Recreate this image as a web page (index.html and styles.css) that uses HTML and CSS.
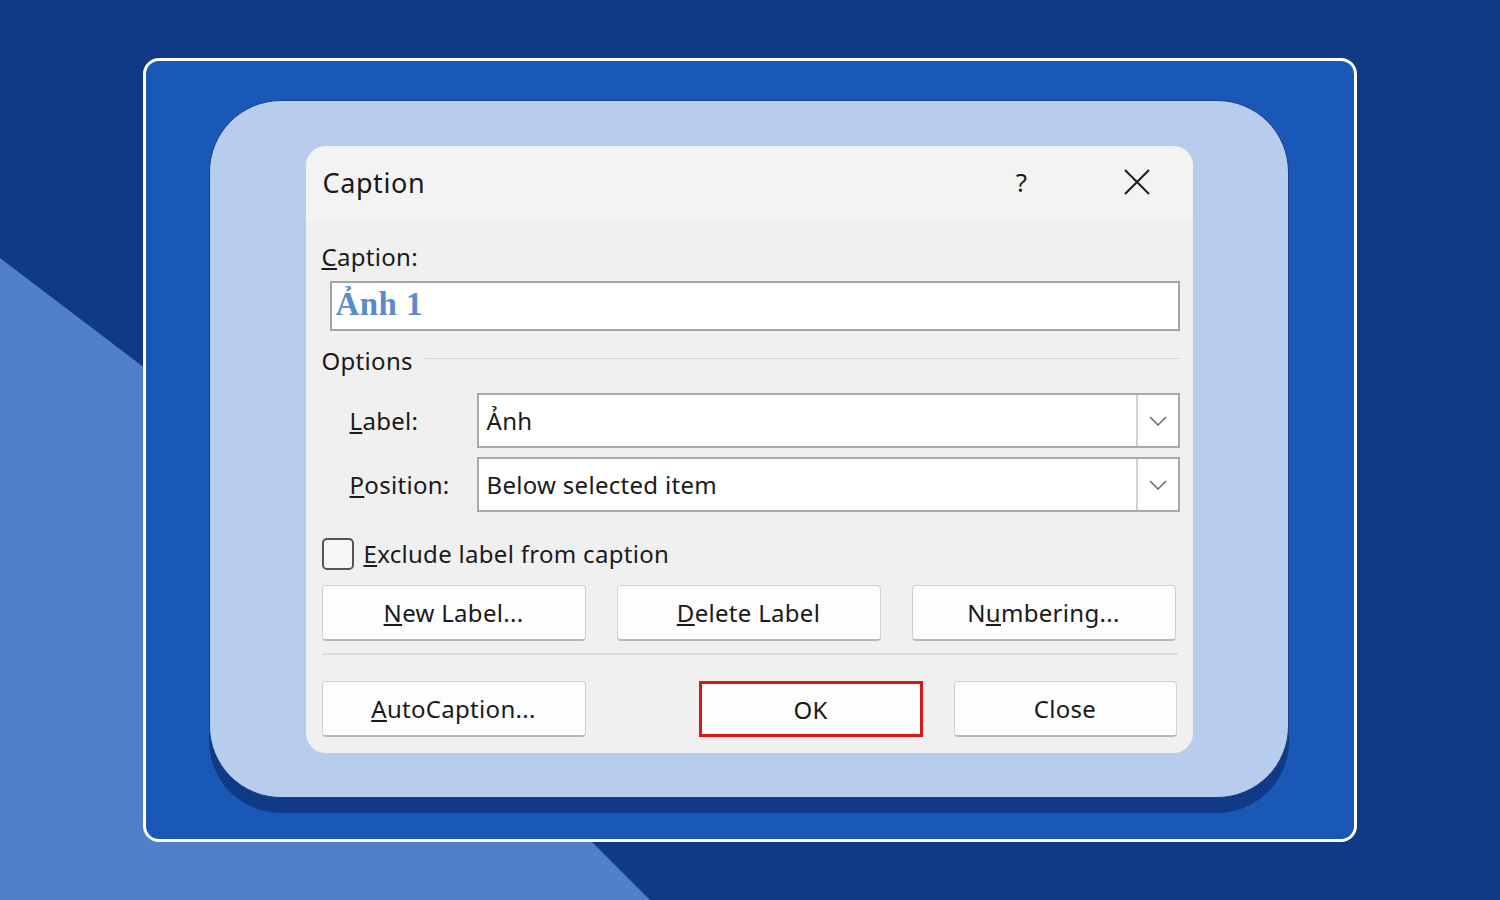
FILE: index.html
```html
<!DOCTYPE html>
<html lang="en">
<head>
  <meta charset="UTF-8" />
  <title>Caption dialog</title>
  <link rel="stylesheet" href="styles.css">
</head>
<body>
  <svg class="bg-shape" width="1500" height="900" viewBox="0 0 1500 900">
    <polygon points="0,258 150,372 150,840 590,840 650,900 0,900" fill="#5080c8"/>
  </svg>

  <div class="frame">
    <div class="panel">
      <div class="dialog">
        <div class="titlebar">
          <span class="title">Caption</span>
          <span class="help">?</span>
          <svg class="close-x" width="28" height="28" viewBox="0 0 28 28">
            <path d="M2 2 L26 26 M26 2 L2 26" stroke="#1a1a1a" stroke-width="2" fill="none"/>
          </svg>
        </div>

        <div class="body">
          <div class="field-label"><u>C</u>aption:</div>
          <div class="caption-input">Ảnh 1</div>

          <div class="group">
            <span>Options</span>
            <div class="group-line"></div>
          </div>

          <div class="row">
            <span class="row-label"><u>L</u>abel:</span>
            <div class="combo">
              <span class="combo-text">Ảnh</span>
              <div class="combo-btn">
                <svg width="18" height="10" viewBox="0 0 18 10"><path d="M1 1 L9 9 L17 1" stroke="#6a6a6a" stroke-width="1.5" fill="none"/></svg>
              </div>
            </div>
          </div>

          <div class="row second">
            <span class="row-label"><u>P</u>osition:</span>
            <div class="combo">
              <span class="combo-text">Below selected item</span>
              <div class="combo-btn">
                <svg width="18" height="10" viewBox="0 0 18 10"><path d="M1 1 L9 9 L17 1" stroke="#6a6a6a" stroke-width="1.5" fill="none"/></svg>
              </div>
            </div>
          </div>

          <div class="check-row">
            <div class="checkbox"></div>
            <span><u>E</u>xclude label from caption</span>
          </div>

          <div class="btn-grid">
            <div class="btn"><span><u>N</u>ew Label...</span></div>
            <div class="btn"><span><u>D</u>elete Label</span></div>
            <div class="btn"><span>N<u>u</u>mbering...</span></div>
          </div>

          <div class="sep"></div>

          <div class="btn-bottom">
            <div class="btn auto"><span><u>A</u>utoCaption...</span></div>
            <div class="btn ok"><span>OK</span></div>
            <div class="btn close"><span>Close</span></div>
          </div>
        </div>
      </div>
    </div>
  </div>
</body>
</html>
```

FILE: styles.css
```css
* {
  box-sizing: border-box;
}

body {
  margin: 0;
  width: 1500px;
  height: 900px;
  background: #103a85;
  font-family: "Noto Sans", "Open Sans", sans-serif;
  color: #1a1a1a;
  overflow: hidden;
  position: relative;
}

.bg-shape {
  position: absolute;
  left: 0;
  top: 0;
}

.frame {
  position: relative;
  margin: 58px 0 0 143px;
  width: 1214px;
  height: 784px;
  background: #1a58b8;
  border: 3px solid #ffffff;
  border-radius: 16px;
  padding: 39px 2px 0 0;
  display: flex;
  justify-content: center;
}

.panel {
  width: 1080px;
  height: 698px;
  background: #b8cdee;
  border: 1px solid #173f8c;
  border-radius: 72px;
  box-shadow: 0 15px 0 #103a85;
  padding-top: 45px;
  display: flex;
  justify-content: center;
}

.dialog {
  width: 887px;
  height: 607px;
  background: #f0f0f0;
  border-radius: 20px;
  overflow: hidden;
}

.titlebar {
  height: 74px;
  background: #f3f3f3;
  display: flex;
  align-items: center;
  padding: 0 0 2px 17px;
}

.title {
  font-size: 27px;
  flex: 1;
  letter-spacing: 0.6px;
}

.help {
  font-size: 26px;
  width: 30px;
  text-align: center;
  margin-right: 86px;
}

.close-x {
  margin-right: 42px;
}

.body {
  padding: 0 13px 0 16px;
  font-size: 24px;
  letter-spacing: 0.3px;
}

.field-label {
  margin-top: 22px;
  line-height: 30px;
}

.caption-input {
  margin: 9px 0 0 8px;
  height: 50px;
  background: #fff;
  border: 2px solid #a3a3a3;
  font-family: "Liberation Serif", serif;
  font-weight: bold;
  font-size: 33px;
  color: #5b8bcc;
  line-height: 42px;
  padding-left: 4px;
  letter-spacing: 0.4px;
}

.group {
  margin-top: 14px;
  height: 30px;
  display: flex;
  align-items: center;
}

.group-line {
  flex: 1;
  height: 1px;
  background: #d9d9d9;
  margin: -4px 0 0 12px;
}

.row {
  margin-top: 18px;
  height: 55px;
  display: flex;
  align-items: center;
  padding-left: 28px;
}

.row.second {
  margin-top: 9px;
}

.row-label {
  width: 127px;
}

.combo {
  flex: 1;
  height: 55px;
  background: #fff;
  border: 2px solid #a9a9a9;
  display: flex;
  align-items: center;
}

.combo-text {
  flex: 1;
  padding-left: 8px;
}

.combo-btn {
  width: 42px;
  height: 100%;
  border-left: 2px solid #cfcfcf;
  display: flex;
  align-items: center;
  justify-content: center;
}

.check-row {
  margin-top: 26px;
  height: 31px;
  display: flex;
  align-items: center;
}

.checkbox {
  width: 32px;
  height: 32px;
  border: 2px solid #555;
  border-radius: 5px;
  background: #f7f7f7;
  margin-right: 10px;
}

.btn-grid {
  margin-top: 16px;
  display: grid;
  grid-template-columns: 264px 264px 264px;
  column-gap: 31px;
}

.btn {
  height: 56px;
  background: #fdfdfd;
  border: 1px solid #d0d0d0;
  border-bottom: 2px solid #b8b8b8;
  border-radius: 4px;
  display: flex;
  align-items: center;
  justify-content: center;
}

.sep {
  margin: 12px 2px 0 0;
  height: 2px;
  background: #dcdcdc;
}

.btn-bottom {
  margin-top: 26px;
  padding-right: 3px;
  display: flex;
}

.btn.auto {
  width: 264px;
}

.btn.ok {
  width: 224px;
  margin-left: auto;
  border: 3px solid #e01515;
  border-radius: 0;
}

.btn.close {
  width: 223px;
  margin-left: 31px;
}
```
